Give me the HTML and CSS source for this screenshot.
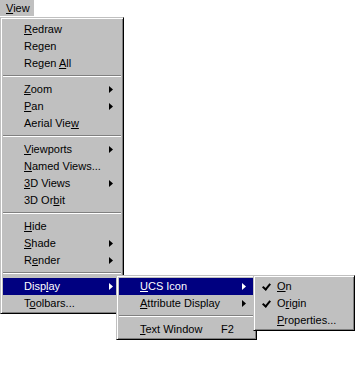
FILE: index.html
```html
<!DOCTYPE html>
<html lang="en">
<head>
    <meta charset="UTF-8">
    <title>View menu</title>
    <link rel="stylesheet" href="styles.css">
</head>
<body>

    <div class="menubar">
        <span class="bar-item"><u>V</u>iew</span>
    </div>

    <div class="menu main">
        <div class="item"><u>R</u>edraw</div>
        <div class="item">Regen</div>
        <div class="item">Regen <u>A</u>ll</div>
        <div class="sep"></div>
        <div class="item sub"><u>Z</u>oom</div>
        <div class="item sub"><u>P</u>an</div>
        <div class="item">Aerial Vie<u>w</u></div>
        <div class="sep"></div>
        <div class="item sub"><u>V</u>iewports</div>
        <div class="item"><u>N</u>amed Views...</div>
        <div class="item sub"><u>3</u>D Views</div>
        <div class="item">3D Or<u>b</u>it</div>
        <div class="sep"></div>
        <div class="item"><u>H</u>ide</div>
        <div class="item sub"><u>S</u>hade</div>
        <div class="item sub">R<u>e</u>nder</div>
        <div class="sep"></div>
        <div class="item sub active">Disp<u>l</u>ay
            <div class="menu display">
                <div class="item sub active"><u>U</u>CS Icon
                    <div class="menu ucs">
                        <div class="item checked"><u>O</u>n</div>
                        <div class="item checked">O<u>r</u>igin</div>
                        <div class="item"><u>P</u>roperties...</div>
                    </div>
                </div>
                <div class="item sub"><u>A</u>ttribute Display</div>
                <div class="sep"></div>
                <div class="item"><u>T</u>ext Window<span class="key">F2</span></div>
            </div>
        </div>
        <div class="item">T<u>o</u>olbars...</div>
    </div>

</body>
</html>
```

FILE: styles.css
```css
html, body { min-height: 376px; }
body { margin: 0; background: #fff; font-family: "Liberation Sans", Arial, sans-serif; font-size: 11px; color: #000; }
u { text-decoration-thickness: 1px; text-underline-offset: 1px; }

.menubar { height: 17px; }
.bar-item { display: inline-block; width: 34px; height: 16px; line-height: 16px; background: #c0c0c0; padding-left: 6px; box-sizing: border-box; }

.menu { background: #c0c0c0; box-sizing: border-box; padding: 2px 2px 1px; border: 1px solid; border-color: #c0c0c0 #000 #000 #c0c0c0; box-shadow: inset 1px 1px 0 #fff, inset -1px -1px 0 #808080; }
.main { width: 124px; padding-top: 3px; }

.item { position: relative; height: 17px; line-height: 17px; padding-left: 21px; white-space: nowrap; }
.item.active { background: #000080; color: #fff; }

.sub::after { content: ""; position: absolute; right: 8px; top: 5px; width: 4px; height: 7px; background: #000; clip-path: polygon(0 0, 100% 50%, 0 100%); }
.sub.active::after { background: #fff; }

.sep { border-top: 1px solid #808080; border-bottom: 1px solid #fff; margin: 3px 0 4px; }

.key { position: absolute; left: 102px; }

.menu .menu { position: absolute; top: -3px; color: #000; }
.display { left: 113px; width: 141px; }
.ucs { left: 134px; width: 102px; }

.checked::before { content: ""; position: absolute; left: 8px; top: 4px; width: 3px; height: 6px; border: solid #000; border-width: 0 2px 2px 0; transform: rotate(40deg); }
```
